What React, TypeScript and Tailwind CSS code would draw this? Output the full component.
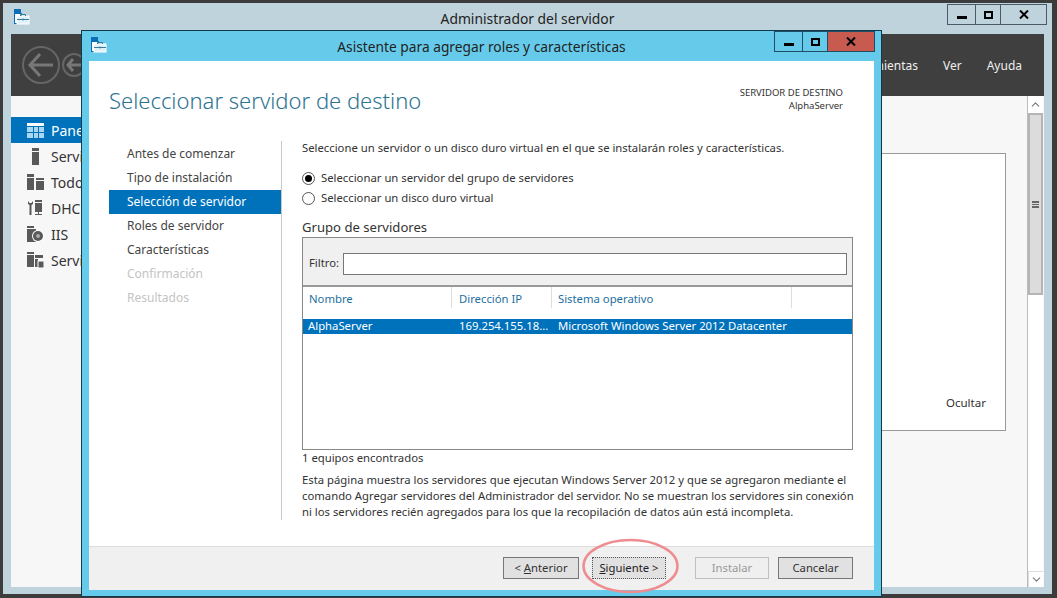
import React from "react";
import { ChevronUp, ChevronDown } from "lucide-react";

const font = "font-['Noto_Sans','Open_Sans',sans-serif]";

function AppIcon() {
  return (
    <svg width="17" height="17" viewBox="0 0 17 17" className="shrink-0">
      <rect x="1" y="1" width="7" height="4" fill="#0a6fb8" />
      <rect x="1.5" y="5.5" width="7" height="10" fill="#fff" stroke="#0a6fb8" />
      <rect x="4" y="8" width="12" height="8" fill="#dff1f8" stroke="#fff" />
      <path d="M7.5 8V6.5h5V8M4 11.5h12M10 10.5v2" fill="none" stroke="#3a7a99" strokeWidth="1" />
    </svg>
  );
}

function WinControls({ dark, close, className }: { dark: string; close: string; className: string }) {
  return (
    <div className={`flex h-[21px] border ${dark} ${className}`}>
      <div className={`w-[28px] flex items-end justify-center pb-[5px] border-r ${dark}`}>
        <div className="w-[10px] h-[3px] bg-black" />
      </div>
      <div className={`w-[25px] flex items-center justify-center border-r ${dark}`}>
        <div className="w-[9px] h-[8px] border-2 border-black" />
      </div>
      <div className={`flex-1 flex items-center justify-center ${close}`}>
        <svg width="10" height="9" viewBox="0 0 10 9">
          <path d="M1 0.5L9 8.5M9 0.5L1 8.5" stroke="#000" strokeWidth="2" />
        </svg>
      </div>
    </div>
  );
}

function NavCircle({ size, icon, ring }: { size: number; icon: number; ring: number }) {
  const c = size / 2;
  const a = icon / 2;
  return (
    <svg width={size} height={size} viewBox={`0 0 ${size} ${size}`} className="shrink-0">
      <circle cx={c} cy={c} r={c - ring / 2} fill="none" stroke="#666" strokeWidth={ring} />
      <path
        d={`M${c + a} ${c}H${c - a + 1}M${c - 1} ${c - a + 1}L${c - a + 1} ${c}L${c - 1} ${c + a - 1}`}
        fill="none"
        stroke="#777"
        strokeWidth={ring + 1}
      />
    </svg>
  );
}

function SideIcon({ kind }: { kind: string }) {
  const g = "#595959";
  if (kind === "panel")
    return (
      <svg width="17" height="15" viewBox="0 0 17 15">
        <rect width="17" height="3" fill="#fff" />
        <path d="M0 4h6v5H0zM7 4h4v5H7zM12 4h5v5h-5zM0 10h6v5H0zM7 10h4v5H7zM12 10h5v5h-5z" fill="#a9d6f0" />
      </svg>
    );
  if (kind === "local")
    return (
      <svg width="17" height="17" viewBox="0 0 17 17">
        <rect x="5" y="0" width="7" height="3" fill={g} />
        <rect x="5" y="4" width="7" height="13" fill={g} />
      </svg>
    );
  if (kind === "all")
    return (
      <svg width="17" height="16" viewBox="0 0 17 16">
        <path d="M0 0h7v3H0zM0 4h7v12H0zM9 4h8v2H9zM9 7h8v9H9z" fill={g} />
      </svg>
    );
  if (kind === "dhcp")
    return (
      <svg width="17" height="16" viewBox="0 0 17 16">
        <path d="M1 1v3l1.5 1v10h2V5L6 4V1L4.5 3h-2z" fill={g} />
        <path d="M8 0h7v2H8zM8 3h7v9H8zM11 12h1v2h3v1H8v-1h3z" fill={g} />
      </svg>
    );
  if (kind === "iis")
    return (
      <svg width="17" height="16" viewBox="0 0 17 16">
        <path d="M0 0h7v2H0zM0 3h9v13H0z" fill={g} />
        <circle cx="11" cy="10" r="6" fill="#fff" />
        <circle cx="11" cy="10" r="5" fill={g} />
        <circle cx="11" cy="10" r="2" fill="#aaa" />
      </svg>
    );
  return (
    <svg width="17" height="16" viewBox="0 0 17 16">
      <path d="M0 0h7v2H0zM0 3h7v12H0zM8 3h8v3H8zM8 7h3v8H8z" fill={g} />
      <rect x="11" y="9" width="6" height="7" fill={g} stroke="#fff" />
    </svg>
  );
}

function SideItem({ kind, label, active }: { kind: string; label: string; active?: boolean }) {
  return (
    <div className={`h-[26px] flex items-center pl-[16px] gap-[7px] whitespace-nowrap text-[14px] ${active ? "bg-[#0072bc] text-white" : "text-[#333]"}`}>
      <div className="w-[17px] flex justify-center"><SideIcon kind={kind} /></div>
      <span>{label}</span>
    </div>
  );
}

function Step({ label, active, off }: { label: string; active?: boolean; off?: boolean }) {
  return (
    <div className={`h-[24px] flex items-center pl-[18px] text-[12px] ${active ? "bg-[#0072bc] text-white" : off ? "text-[#c4c4c4]" : "text-[#444]"}`}>
      {label}
    </div>
  );
}

function Radio({ label, on }: { label: string; on?: boolean }) {
  return (
    <div className="flex items-center gap-[6px] h-[20px]">
      <div className="w-[13px] h-[13px] rounded-full border border-[#555] bg-white flex items-center justify-center">
        {on && <div className="w-[7px] h-[7px] rounded-full bg-black" />}
      </div>
      <span>{label}</span>
    </div>
  );
}

function Btn({ children, className }: { children: React.ReactNode; className: string }) {
  return (
    <div className={`h-[22px] flex items-center justify-center text-[11.3px] border ${className}`}>{children}</div>
  );
}

export default function App() {
  return (
    <div className={`relative w-[1057px] h-[598px] overflow-hidden bg-[#3c3c3c] ${font}`}>
      {/* ventana de fondo */}
      <div className="absolute left-[3px] top-[3px] w-[1049px] h-[591px] bg-[#bfd3dd]">
        <div className="flex items-center h-[31px] relative">
          <div className="pl-[10px] pb-[4px]"><AppIcon /></div>
          <div className="absolute left-0 right-0 top-[6px] text-center text-[13.85px] text-[#222]">Administrador del servidor</div>
          <WinControls dark="border-[#4b5a63]" close="" className="absolute left-[944px] top-[1px] w-[100px]" />
        </div>
        <div className="mx-[8px] h-[553px] flex flex-col bg-[#f7f7f7]">
          <div className="h-[62px] bg-[#3f3f3f] flex items-center pl-[11px] gap-[2px]">
            <NavCircle size={38} icon={24} ring={2} />
            <NavCircle size={24} icon={14} ring={2} />
            <div className="ml-auto flex text-[12px] text-[#eee] gap-[24px] pr-[22px] pt-[2px]">
              <span>Herramientas</span>
              <span className="ml-[1px]">Ver</span>
              <span className="ml-[1px]">Ayuda</span>
            </div>
          </div>
          <div className="flex flex-1 min-h-0">
            <div className="flex-1 relative pt-[21px]">
              <div className="w-[70px] overflow-hidden">
                <SideItem kind="panel" label="Panel" active />
                <SideItem kind="local" label="Servidor local" />
                <SideItem kind="all" label="Todos los servidores" />
                <SideItem kind="dhcp" label="DHCP" />
                <SideItem kind="iis" label="IIS" />
                <SideItem kind="files" label="Servicios de archivos" />
              </div>
              <div className="absolute left-[800px] top-[57px] w-[195px] h-[278px] bg-white border border-[#999] flex items-end pb-[19px] pl-[134px] text-[11.5px] text-[#333]">
                Ocultar
              </div>
            </div>
            <div className="w-[16px] mr-[1px] flex flex-col bg-white border-l border-[#bbb]">
              <div className="h-[17px] flex items-center justify-center text-[#777]"><ChevronUp size={13} /></div>
              <div className="h-[182px] bg-[#dcdcdc] border-2 border-[#b5b5b5] flex items-center justify-center">
                <div className="w-[7px] h-[7px] border-y-2 border-[#666] flex items-center"><div className="w-full h-px bg-[#666]" /></div>
              </div>
              <div className="flex-1" />
              <div className="h-[16px] flex items-center justify-center text-[#777] border-t border-l border-[#ddd]"><ChevronDown size={13} /></div>
            </div>
          </div>
        </div>
      </div>

      {/* asistente */}
      <div className="absolute left-[81px] top-[30px] w-[801px] h-[567px] bg-[#66cbea] border border-[#123a4a] flex flex-col">
        <div className="h-[30px] shrink-0 relative">
          <div className="absolute left-[8px] top-[5px]"><AppIcon /></div>
          <div className="absolute left-0 right-0 top-[6px] text-center text-[13.75px] text-[#222]">Asistente para agregar roles y características</div>
          <WinControls dark="border-[#1f4f66]" close="bg-[#c75b50]" className="absolute left-[692px] top-0 w-[101px]" />
        </div>
        <div className="mx-[7px] mb-[6px] flex-1 flex flex-col bg-white min-h-0 border-t border-[#fff]">
          <div className="h-[79px] shrink-0 flex justify-between pl-[20px] pr-[31px]">
            <div className="text-[22px] font-light text-[#2c7391] pt-[23px] leading-[30px]">Seleccionar servidor de destino</div>
            <div className="text-right text-[9.5px] leading-[13px] text-[#333] pt-[24px]">
              <div>SERVIDOR DE DESTINO</div>
              <div>AlphaServer</div>
            </div>
          </div>
          <div className="flex flex-1 min-h-0">
            <div className="w-[172px] ml-[20px] pt-[1px] shrink-0">
              <Step label="Antes de comenzar" />
              <Step label="Tipo de instalación" />
              <Step label="Selección de servidor" active />
              <Step label="Roles de servidor" />
              <Step label="Características" />
              <Step label="Confirmación" off />
              <Step label="Resultados" off />
            </div>
            <div className="w-px h-[379px] bg-[#c8c8c8] shrink-0" />
            <div className="ml-[20px] w-[551px] text-[11.3px] text-[#333]">
              <div className="h-[14px] leading-[14px]">Seleccione un servidor o un disco duro virtual en el que se instalarán roles y características.</div>
              <div className="mt-[13px]">
                <Radio label="Seleccionar un servidor del grupo de servidores" on />
                <Radio label="Seleccionar un disco duro virtual" />
              </div>
              <div className="mt-[12px] h-[17px] text-[13.1px] leading-[15px]">Grupo de servidores</div>
              <div className="h-[213px] border border-[#888] flex flex-col">
                <div className="h-[49px] shrink-0 bg-[#f0f0f0] border-b-2 border-[#999] flex items-center pl-[6px] pt-[4px] gap-[4px]">
                  <span className="w-[30px]">Filtro:</span>
                  <div className="w-[504px] h-[22px] bg-white border border-[#777]" />
                </div>
                <div className="h-[21px] flex text-[#1e6fa0] shrink-0">
                  <div className="w-[149px] pl-[6px] pt-[4px] border-r border-[#ddd]">Nombre</div>
                  <div className="w-[100px] pl-[7px] pt-[4px] border-r border-[#ddd]">Dirección IP</div>
                  <div className="w-[240px] pl-[6px] pt-[4px] border-r border-[#ddd]">Sistema operativo</div>
                </div>
                <div className="mt-[11px] h-[15px] bg-[#0072bc] text-white flex items-center">
                  <div className="w-[150px] pl-[5px]">AlphaServer</div>
                  <div className="w-[100px] pl-[6px]">169.254.155.18...</div>
                  <div className="pl-[5px] whitespace-nowrap">Microsoft Windows Server 2012 Datacenter</div>
                </div>
              </div>
              <div className="h-[16px] leading-[16px]">1 equipos encontrados</div>
              <div className="mt-[6px] leading-[16px] whitespace-nowrap">
                Esta página muestra los servidores que ejecutan Windows Server 2012 y que se agregaron mediante el
                <br />
                comando Agregar servidores del Administrador del servidor. No se muestran los servidores sin conexión
                <br />
                ni los servidores recién agregados para los que la recopilación de datos aún está incompleta.
              </div>
            </div>
          </div>
          <div className="h-[44px] shrink-0 bg-[#f0f0f0] border-t border-[#ddd] flex items-start pt-[10px] pl-[414px]">
            <Btn className="w-[76px] bg-[#e1e1e1] border-[#777] text-[#333]">&lt;&nbsp;<span className="underline">A</span>nterior</Btn>
            <Btn className="ml-[13px] w-[74px] bg-[#e1e1e1] border-[#555] border-dotted text-[#222]"><span className="underline">S</span>iguiente &gt;</Btn>
            <Btn className="ml-[29px] w-[74px] bg-[#efefef] border-[#c0c0c0] text-[#9a9a9a]">Instalar</Btn>
            <Btn className="ml-[9px] w-[75px] bg-[#e1e1e1] border-[#777] text-[#333]">Cancelar</Btn>
          </div>
        </div>
      </div>

      {/* marca sobre el botón */}
      <svg width="100" height="60" viewBox="0 0 100 60" className="absolute left-[581px] top-[537px]">
        <ellipse cx="49.5" cy="29" rx="47" ry="26" fill="none" stroke="#ee8c90" strokeWidth="2.5" />
      </svg>
    </div>
  );
}
